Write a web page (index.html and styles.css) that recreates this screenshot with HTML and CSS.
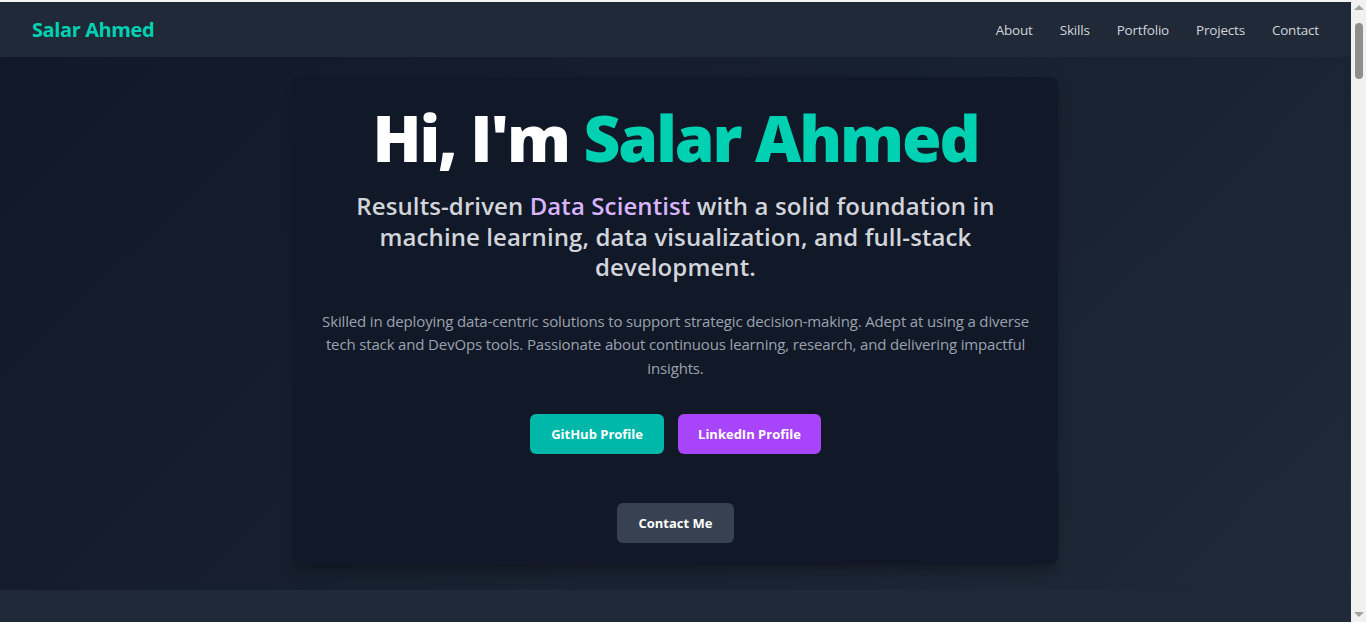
FILE: index.html
```html
<!DOCTYPE html>
<html lang="en">
<head>
<meta charset="utf-8">
<title>Salar Ahmed</title>
<link rel="stylesheet" href="styles.css">
</head>
<body>
<header class="nav">
  <a class="brand" href="#">Salar Ahmed</a>
  <nav class="links">
    <a href="#about">About</a>
    <a href="#skills">Skills</a>
    <a href="#portfolio">Portfolio</a>
    <a href="#projects">Projects</a>
    <a href="#contact">Contact</a>
  </nav>
</header>
<section class="hero">
  <div class="card">
    <h1 class="title">Hi, I'm <span class="accent">Salar Ahmed</span></h1>
    <p class="subtitle">Results-driven <span class="purple">Data Scientist</span> with a solid foundation in machine learning, data visualization, and full-stack development.</p>
    <p class="intro">Skilled in deploying data-centric solutions to support strategic decision-making. Adept at using a diverse tech stack and DevOps tools. Passionate about continuous learning, research, and delivering impactful insights.</p>
    <div class="buttons">
      <a class="btn btn-teal" href="#">GitHub Profile</a>
      <a class="btn btn-purple" href="#">LinkedIn Profile</a>
    </div>
    <div class="contact-row">
      <a class="btn btn-gray" href="#contact">Contact Me</a>
    </div>
  </div>
</section>
<section class="next" id="about"></section>
<div class="scrollbar" aria-hidden="true">
  <span class="arrow-up"></span>
  <span class="thumb"></span>
  <span class="track"></span>
  <span class="arrow-down"></span>
</div>
</body>
</html>
```
FILE: styles.css
```css
* { box-sizing: border-box; }
html, body { margin: 0; padding: 0; }
body {
  font-family: "Open Sans", "Noto Sans", "Liberation Sans", sans-serif;
  background: #1f2937;
  border-top: 2px solid #f3f3f3;
  padding-right: 15px;
}
a { text-decoration: none; }
.nav {
  height: 55px;
  background: #1f2937;
  display: flex;
  align-items: center;
  justify-content: space-between;
  padding: 0 32px;
}
.brand {
  color: #00d1b2;
  font-weight: 700;
  font-size: 20px;
  letter-spacing: -0.4px;
}
.links { display: flex; gap: 27px; }
.links a { color: #d1d5db; font-size: 13.5px; letter-spacing: -0.2px; }
.hero {
  background: linear-gradient(135deg, #111827 0%, #1f2937 100%);
  padding: 20px 0 26px;
  display: flex;
  justify-content: center;
}
.card {
  width: 765px;
  background: #111827;
  border-radius: 8px;
  box-shadow: 0 10px 15px -3px rgba(0,0,0,0.25), 0 4px 6px -4px rgba(0,0,0,0.2);
  padding: 26px 24px 21px;
  text-align: center;
}
.title {
  margin: 0;
  font-size: 64px;
  line-height: 70px;
  font-weight: 800;
  letter-spacing: -2.1px;
  color: #ffffff;
}
.accent { color: #00d1b2; }
.subtitle {
  margin: 18px auto 0;
  max-width: 672px;
  font-size: 24px;
  line-height: 30.5px;
  font-weight: 600;
  letter-spacing: 0.1px;
  color: #d1d5db;
}
.purple { color: #d8b4fe; }
.intro {
  margin: 27px 0 0;
  font-size: 15px;
  line-height: 23.5px;
  letter-spacing: -0.15px;
  color: #9ca3af;
}
.buttons {
  margin-top: 34px;
  display: flex;
  justify-content: center;
  gap: 14px;
}
.btn {
  display: inline-flex;
  align-items: center;
  justify-content: center;
  height: 40px;
  padding: 0 21px;
  border-radius: 6px;
  color: #ffffff;
  font-weight: 700;
  font-size: 13px;
}
.btn-teal { background: #00b8a9; }
.btn-purple { background: #a845fa; padding: 0 20px; }
.btn-gray { background: #374151; }
.contact-row {
  margin-top: 49px;
  display: flex;
  justify-content: center;
}
.next {
  height: 400px;
  background: #1f2937;
}
.scrollbar {
  position: fixed;
  top: 0;
  right: 0;
  width: 15px;
  height: 100vh;
  background: #f1f1f1;
  display: flex;
  flex-direction: column;
  align-items: center;
}
.arrow-up {
  margin-top: 5px;
  width: 0; height: 0;
  border-left: 5px solid transparent;
  border-right: 5px solid transparent;
  border-bottom: 5px solid #a3a3a3;
}
.thumb {
  margin-top: 13px;
  width: 8px;
  height: 56px;
  border-radius: 4px;
  background: #8f8f8f;
}
.track { flex: 1; }
.arrow-down {
  margin-bottom: 5px;
  width: 0; height: 0;
  border-left: 5px solid transparent;
  border-right: 5px solid transparent;
  border-top: 5px solid #a3a3a3;
}
```
